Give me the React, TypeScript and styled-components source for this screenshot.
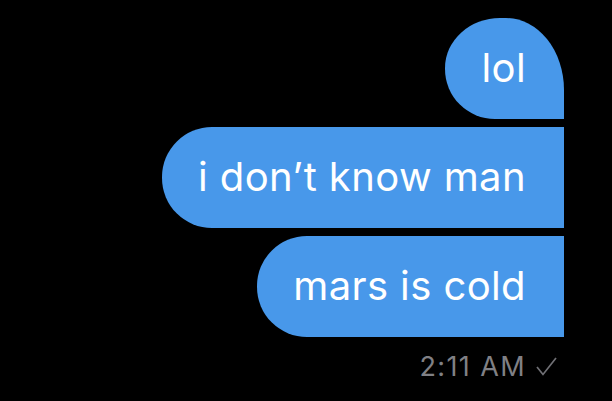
import styled, { createGlobalStyle } from 'styled-components'

const GlobalStyle = createGlobalStyle`
  html, body {
    margin: 0;
    padding: 0;
    background: #000;
  }
`

const Thread = styled.div`
  box-sizing: border-box;
  width: 612px;
  height: 401px;
  background: #000;
  display: flex;
  flex-direction: column;
  align-items: flex-end;
  gap: 8px;
  padding: 18px 48px 0 0;
  font-family: Inter, 'Liberation Sans', sans-serif;
`

const Bubble = styled.div<{ first?: boolean }>`
  box-sizing: border-box;
  height: 101px;
  display: flex;
  align-items: center;
  padding: 0 38px 2px 36px;
  background: #4898ea;
  color: #fff;
  font-size: 40px;
  letter-spacing: 0.4px;
  white-space: nowrap;
  border-radius: ${({ first }) => (first ? '55px 58px 0 50px / 50px 72px 0 50px' : '50px 0 0 50px')};
`

const Meta = styled.div`
  display: flex;
  align-items: center;
  gap: 10px;
  margin-top: 5px;
  padding-right: 7px;
  color: #808085;
  font-size: 27px;
  letter-spacing: 1.4px;
`

const Tick = () => (
  <svg width="21" height="19" viewBox="0 0 21 19">
    <path d="M1 10 L7 17.5 L20 1" fill="none" stroke="#707075" strokeWidth="1.7" />
  </svg>
)

const App = () => {
  const messages = ['lol', 'i don’t know man', 'mars is cold']

  return (
    <>
      <GlobalStyle />
      <Thread>
        {messages.map((text, i) => (
          <Bubble key={text} first={i === 0}>
            {text}
          </Bubble>
        ))}
        <Meta>
          2:11 AM
          <Tick />
        </Meta>
      </Thread>
    </>
  )
}

export default App
